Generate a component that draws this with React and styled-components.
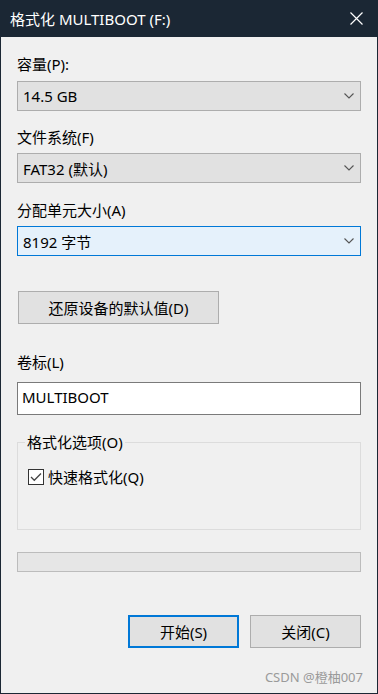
import React from 'react';
import styled, { createGlobalStyle } from 'styled-components';

const GlobalStyle = createGlobalStyle`
    html, body {
        margin: 0;
        padding: 0;
        background: #f0f0f0;
    }
    * {
        box-sizing: border-box;
    }
`

const Window = styled.div`
    width: 378px;
    height: 694px;
    background: #f0f0f0;
    border: 1px solid #1b2734;
    border-top: none;
    display: flex;
    flex-direction: column;
    font-family: "Noto Sans", "Noto Sans CJK SC", sans-serif;
    font-size: 15px;
    color: #000;
    position: relative;
`

const TitleBar = styled.div`
    height: 37px;
    margin: 0 -1px;
    background: #1b2734;
    color: #fff;
    display: flex;
    align-items: center;
    justify-content: space-between;
    padding: 0 15px 0 10px;
    font-size: 15px;
`

const Content = styled.div`
    display: flex;
    flex-direction: column;
    padding: 17px 16px 0 16px;
`

const Label = styled.div`
    line-height: 20px;
    height: 20px;
    margin-top: ${p => p.$mt || 0}px;
`

const Combo = styled.div`
    height: 30px;
    margin-top: ${p => p.$mt || 0}px;
    background: ${p => p.$focus ? '#e5f1fb' : '#e1e1e1'};
    border: 1px solid ${p => p.$focus ? '#0078d7' : '#adadad'};
    display: flex;
    align-items: center;
    justify-content: space-between;
    padding: 0 6px 0 5px;
`

const Button = styled.div`
    height: 33px;
    width: ${p => p.$w}px;
    margin-top: ${p => p.$mt || 0}px;
    margin-left: ${p => p.$ml || 0}px;
    background: #e1e1e1;
    border: ${p => p.$primary ? '2px solid #0078d7' : '1px solid #adadad'};
    display: flex;
    align-items: center;
    justify-content: center;
`

const TextBox = styled.div`
    height: 33px;
    margin-top: 10px;
    background: #fff;
    border: 1px solid #7a7a7a;
    display: flex;
    align-items: center;
    padding: 0 0 3px 4px;
`

const Group = styled.div`
    height: 88px;
    margin-top: 27px;
    border: 1px solid #dcdcdc;
    display: flex;
    flex-direction: column;
`

const Legend = styled.span`
    align-self: flex-start;
    line-height: 20px;
    margin: -11px 0 0 7px;
    padding: 0 2px;
    background: #f0f0f0;
`

const CheckRow = styled.div`
    display: flex;
    align-items: center;
    gap: 4px;
    margin: 15px 0 0 10px;
    line-height: 20px;
`

const CheckBox = styled.div`
    width: 16px;
    height: 16px;
    border: 1px solid #333;
    background: #fff;
    display: flex;
    align-items: center;
    justify-content: center;
`

const Progress = styled.div`
    height: 20px;
    margin-top: 22px;
    background: #e6e6e6;
    border: 1px solid #bcbcbc;
`

const ButtonRow = styled.div`
    display: flex;
    justify-content: flex-end;
    margin-top: 43px;
`

const Watermark = styled.div`
    position: absolute;
    right: 14px;
    bottom: 8px;
    font-size: 13px;
    color: #9a9a9a;
    line-height: 16px;
`

const Chevron = () => (
    <svg width="10" height="6" viewBox="0 0 10 6">
        <path d="M0.5 0.5 L5 5 L9.5 0.5" fill="none" stroke="#555" strokeWidth="1.1" />
    </svg>
)

const CloseIcon = () => (
    <svg width="13" height="13" viewBox="0 0 13 13">
        <path d="M0.5 0.5 L12.5 12.5 M12.5 0.5 L0.5 12.5" stroke="#fff" strokeWidth="1.2" />
    </svg>
)

const CheckMark = () => (
    <svg width="12" height="10" viewBox="0 0 12 10">
        <path d="M1 5 L4.3 8.3 L11 1.5" fill="none" stroke="#444" strokeWidth="1.3" />
    </svg>
)

const App = () => (
    <>
        <GlobalStyle />
        <Window>
            <TitleBar>
                <span>格式化 MULTIBOOT (F:)</span>
                <CloseIcon />
            </TitleBar>
            <Content>
                <Label>容量(P):</Label>
                <Combo $mt={7}>
                    <span>14.5 GB</span>
                    <Chevron />
                </Combo>

                <Label $mt={16}>文件系统(F)</Label>
                <Combo $mt={6}>
                    <span>FAT32 (默认)</span>
                    <Chevron />
                </Combo>

                <Label $mt={17}>分配单元大小(A)</Label>
                <Combo $mt={6} $focus>
                    <span>8192 字节</span>
                    <Chevron />
                </Combo>

                <Button $w={201} $ml={1} $mt={35}>还原设备的默认值(D)</Button>

                <Label $mt={28}>卷标(L)</Label>
                <TextBox>MULTIBOOT</TextBox>

                <Group>
                    <Legend>格式化选项(O)</Legend>
                    <CheckRow>
                        <CheckBox><CheckMark /></CheckBox>
                        <span>快速格式化(Q)</span>
                    </CheckRow>
                </Group>

                <Progress />

                <ButtonRow>
                    <Button $w={111} $primary>开始(S)</Button>
                    <Button $w={111} $ml={11}>关闭(C)</Button>
                </ButtonRow>
            </Content>
            <Watermark>CSDN @橙柚007</Watermark>
        </Window>
    </>
);

export default App;
